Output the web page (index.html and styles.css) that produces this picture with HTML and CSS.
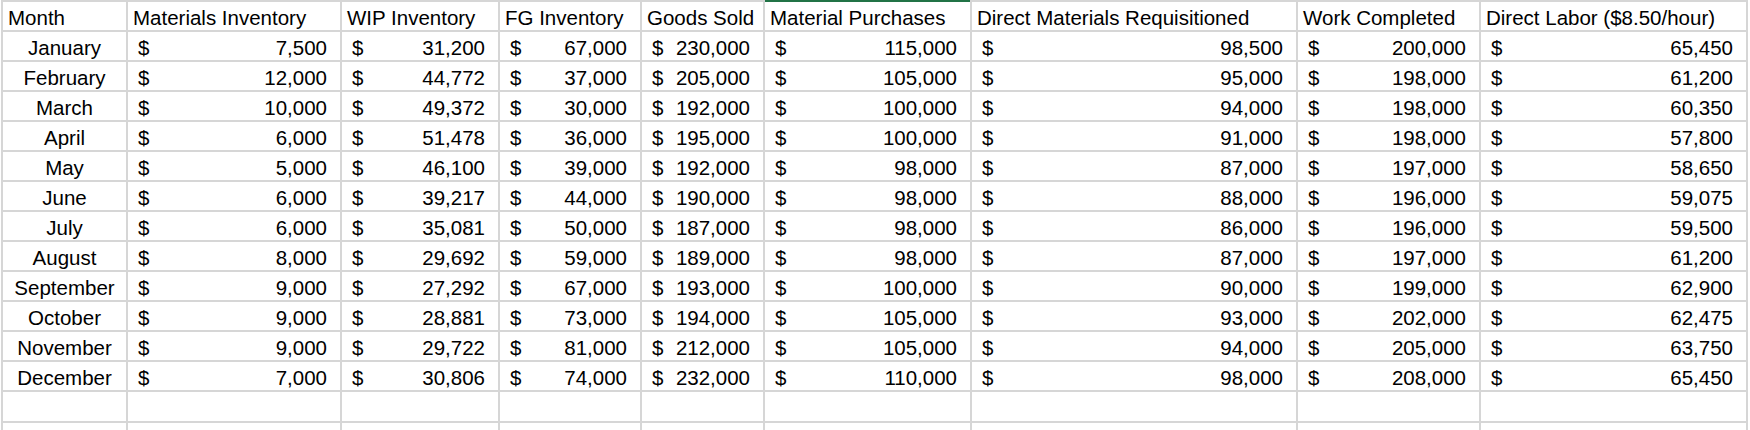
FILE: index.html
```html
<!DOCTYPE html>
<html>
<head>
<meta charset="utf-8">
<link rel="stylesheet" href="styles.css">
</head>
<body>
<table class="sheet">
<colgroup>
<col class="c-month"><col class="c-mat"><col class="c-wip"><col class="c-fg"><col class="c-gs"><col class="c-mp"><col class="c-dmr"><col class="c-wc"><col class="c-dl">
</colgroup>
<thead>
<tr>
<th>Month</th><th>Materials Inventory</th><th>WIP Inventory</th><th>FG Inventory</th><th>Goods Sold</th><th class="sel">Material Purchases</th><th>Direct Materials Requisitioned</th><th>Work Completed</th><th>Direct Labor ($8.50/hour)</th>
</tr>
</thead>
<tbody>
<tr><td class="m">January</td><td><div class="acc"><span>$</span><span>7,500</span></div></td><td><div class="acc"><span>$</span><span>31,200</span></div></td><td><div class="acc"><span>$</span><span>67,000</span></div></td><td><div class="acc"><span>$</span><span>230,000</span></div></td><td><div class="acc"><span>$</span><span>115,000</span></div></td><td><div class="acc"><span>$</span><span>98,500</span></div></td><td><div class="acc"><span>$</span><span>200,000</span></div></td><td><div class="acc"><span>$</span><span>65,450</span></div></td></tr>
<tr><td class="m">February</td><td><div class="acc"><span>$</span><span>12,000</span></div></td><td><div class="acc"><span>$</span><span>44,772</span></div></td><td><div class="acc"><span>$</span><span>37,000</span></div></td><td><div class="acc"><span>$</span><span>205,000</span></div></td><td><div class="acc"><span>$</span><span>105,000</span></div></td><td><div class="acc"><span>$</span><span>95,000</span></div></td><td><div class="acc"><span>$</span><span>198,000</span></div></td><td><div class="acc"><span>$</span><span>61,200</span></div></td></tr>
<tr><td class="m">March</td><td><div class="acc"><span>$</span><span>10,000</span></div></td><td><div class="acc"><span>$</span><span>49,372</span></div></td><td><div class="acc"><span>$</span><span>30,000</span></div></td><td><div class="acc"><span>$</span><span>192,000</span></div></td><td><div class="acc"><span>$</span><span>100,000</span></div></td><td><div class="acc"><span>$</span><span>94,000</span></div></td><td><div class="acc"><span>$</span><span>198,000</span></div></td><td><div class="acc"><span>$</span><span>60,350</span></div></td></tr>
<tr><td class="m">April</td><td><div class="acc"><span>$</span><span>6,000</span></div></td><td><div class="acc"><span>$</span><span>51,478</span></div></td><td><div class="acc"><span>$</span><span>36,000</span></div></td><td><div class="acc"><span>$</span><span>195,000</span></div></td><td><div class="acc"><span>$</span><span>100,000</span></div></td><td><div class="acc"><span>$</span><span>91,000</span></div></td><td><div class="acc"><span>$</span><span>198,000</span></div></td><td><div class="acc"><span>$</span><span>57,800</span></div></td></tr>
<tr><td class="m">May</td><td><div class="acc"><span>$</span><span>5,000</span></div></td><td><div class="acc"><span>$</span><span>46,100</span></div></td><td><div class="acc"><span>$</span><span>39,000</span></div></td><td><div class="acc"><span>$</span><span>192,000</span></div></td><td><div class="acc"><span>$</span><span>98,000</span></div></td><td><div class="acc"><span>$</span><span>87,000</span></div></td><td><div class="acc"><span>$</span><span>197,000</span></div></td><td><div class="acc"><span>$</span><span>58,650</span></div></td></tr>
<tr><td class="m">June</td><td><div class="acc"><span>$</span><span>6,000</span></div></td><td><div class="acc"><span>$</span><span>39,217</span></div></td><td><div class="acc"><span>$</span><span>44,000</span></div></td><td><div class="acc"><span>$</span><span>190,000</span></div></td><td><div class="acc"><span>$</span><span>98,000</span></div></td><td><div class="acc"><span>$</span><span>88,000</span></div></td><td><div class="acc"><span>$</span><span>196,000</span></div></td><td><div class="acc"><span>$</span><span>59,075</span></div></td></tr>
<tr><td class="m">July</td><td><div class="acc"><span>$</span><span>6,000</span></div></td><td><div class="acc"><span>$</span><span>35,081</span></div></td><td><div class="acc"><span>$</span><span>50,000</span></div></td><td><div class="acc"><span>$</span><span>187,000</span></div></td><td><div class="acc"><span>$</span><span>98,000</span></div></td><td><div class="acc"><span>$</span><span>86,000</span></div></td><td><div class="acc"><span>$</span><span>196,000</span></div></td><td><div class="acc"><span>$</span><span>59,500</span></div></td></tr>
<tr><td class="m">August</td><td><div class="acc"><span>$</span><span>8,000</span></div></td><td><div class="acc"><span>$</span><span>29,692</span></div></td><td><div class="acc"><span>$</span><span>59,000</span></div></td><td><div class="acc"><span>$</span><span>189,000</span></div></td><td><div class="acc"><span>$</span><span>98,000</span></div></td><td><div class="acc"><span>$</span><span>87,000</span></div></td><td><div class="acc"><span>$</span><span>197,000</span></div></td><td><div class="acc"><span>$</span><span>61,200</span></div></td></tr>
<tr><td class="m">September</td><td><div class="acc"><span>$</span><span>9,000</span></div></td><td><div class="acc"><span>$</span><span>27,292</span></div></td><td><div class="acc"><span>$</span><span>67,000</span></div></td><td><div class="acc"><span>$</span><span>193,000</span></div></td><td><div class="acc"><span>$</span><span>100,000</span></div></td><td><div class="acc"><span>$</span><span>90,000</span></div></td><td><div class="acc"><span>$</span><span>199,000</span></div></td><td><div class="acc"><span>$</span><span>62,900</span></div></td></tr>
<tr><td class="m">October</td><td><div class="acc"><span>$</span><span>9,000</span></div></td><td><div class="acc"><span>$</span><span>28,881</span></div></td><td><div class="acc"><span>$</span><span>73,000</span></div></td><td><div class="acc"><span>$</span><span>194,000</span></div></td><td><div class="acc"><span>$</span><span>105,000</span></div></td><td><div class="acc"><span>$</span><span>93,000</span></div></td><td><div class="acc"><span>$</span><span>202,000</span></div></td><td><div class="acc"><span>$</span><span>62,475</span></div></td></tr>
<tr><td class="m">November</td><td><div class="acc"><span>$</span><span>9,000</span></div></td><td><div class="acc"><span>$</span><span>29,722</span></div></td><td><div class="acc"><span>$</span><span>81,000</span></div></td><td><div class="acc"><span>$</span><span>212,000</span></div></td><td><div class="acc"><span>$</span><span>105,000</span></div></td><td><div class="acc"><span>$</span><span>94,000</span></div></td><td><div class="acc"><span>$</span><span>205,000</span></div></td><td><div class="acc"><span>$</span><span>63,750</span></div></td></tr>
<tr><td class="m">December</td><td><div class="acc"><span>$</span><span>7,000</span></div></td><td><div class="acc"><span>$</span><span>30,806</span></div></td><td><div class="acc"><span>$</span><span>74,000</span></div></td><td><div class="acc"><span>$</span><span>232,000</span></div></td><td><div class="acc"><span>$</span><span>110,000</span></div></td><td><div class="acc"><span>$</span><span>98,000</span></div></td><td><div class="acc"><span>$</span><span>208,000</span></div></td><td><div class="acc"><span>$</span><span>65,450</span></div></td></tr>
<tr class="blank"><td></td><td></td><td></td><td></td><td></td><td></td><td></td><td></td><td></td></tr>
<tr class="blank"><td></td><td></td><td></td><td></td><td></td><td></td><td></td><td></td><td></td></tr>
</tbody>
</table>
</body>
</html>
```
FILE: styles.css
```css
html, body {
  margin: 0;
  padding: 0;
  background: #ffffff;
  overflow: hidden;
}

body {
  height: 430px;
  font-family: "Liberation Sans", Arial, sans-serif;
  font-size: 20.5px;
  color: #000000;
}

.sheet {
  margin-left: 1px;
  border-collapse: collapse;
  table-layout: fixed;
  width: 1747px;
}

.c-month { width: 125px; }
.c-mat { width: 214px; }
.c-wip { width: 158px; }
.c-fg { width: 142px; }
.c-gs { width: 123px; }
.c-mp { width: 207px; }
.c-dmr { width: 326px; }
.c-wc { width: 183px; }
.c-dl { width: 267px; }

.sheet th,
.sheet td {
  border: 2px solid #d6d6d6;
  height: 28px;
  padding: 4px 0 0 0;
  box-sizing: border-box;
  line-height: 24px;
  vertical-align: top;
  white-space: nowrap;
  overflow: hidden;
}

.sheet th {
  font-weight: normal;
  text-align: left;
  padding-left: 5px;
}

.sheet th.sel {
  border-top-color: #217346;
}

.sheet td.m {
  text-align: center;
}

.acc {
  display: flex;
  justify-content: space-between;
  padding: 0 13px 0 10px;
}

.sheet tr {
  height: 30px;
}

.sheet tr.blank {
  height: 31px;
}
```
